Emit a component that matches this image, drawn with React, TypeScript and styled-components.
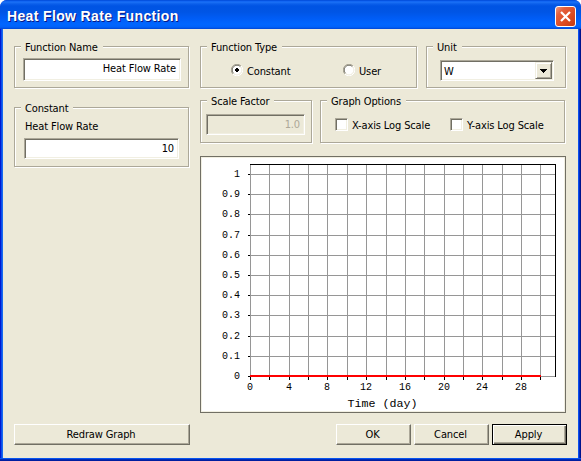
import styled, { createGlobalStyle, css } from "styled-components";

const GlobalStyle = createGlobalStyle`
  * {
    box-sizing: border-box;
  }

  body {
    margin: 0;
    background: #fff;
    color: #000;
    font: 11px/14px "DejaVu Sans Condensed", "DejaVu Sans", sans-serif;
    font-stretch: condensed;
    letter-spacing: -0.13px;
    white-space: nowrap;
  }
`;

const face = "#ece9d8";
const shadow = "#aca899";
const darkShadow = "#716f64";

const Window = styled.div`
  display: flex;
  flex-direction: column;
  width: 581px;
  height: 461px;
  overflow: hidden;
  border-radius: 7px 7px 0 0;
  background: #0831d9;
`;

const TitleBar = styled.header`
  display: flex;
  align-items: center;
  justify-content: space-between;
  height: 29px;
  padding: 2px 5px 0 7px;
  background: linear-gradient(
    180deg,
    #0048d0 0,
    #0a5cf0 1px,
    #1c72f6 2px,
    #0a5eea 4px,
    #0054e3 6px,
    #0055e5 12px,
    #005cf5 18px,
    #0066ff 24px,
    #0062fa 27px,
    #0046d4 29px
  );
`;

const Title = styled.h1`
  margin: 0;
  color: #fff;
  font: bold 14px/18px "Liberation Sans", Arial, sans-serif;
  letter-spacing: 0.36px;
  text-shadow: 1px 1px 0 #0a1883;
`;

const CloseButton = styled.button`
  display: flex;
  align-items: center;
  justify-content: center;
  width: 21px;
  height: 21px;
  margin-top: 1px;
  padding: 0;
  border: 1px solid #fff;
  border-radius: 3px;
  background: linear-gradient(135deg, #ee9a80 0, #e4603c 25%, #dc4a20 65%, #c23a12 100%);
`;

const Frame = styled.div`
  display: flex;
  flex: 1;
  padding: 0 3px 3px;
  background:
    linear-gradient(0deg, #001ea0 0 1px, #0029b8 1px 2px, #0855ee 2px 3px, transparent 3px),
    linear-gradient(90deg, #0019cf 0 1px, #0b4bec 1px 2px, #166aee 2px 3px, transparent 3px 578px, #0b50ee 578px 579px, #0029c0 579px 580px, #00138c 580px);
`;

const Body = styled.main`
  display: flex;
  flex: 1;
  flex-direction: column;
  gap: 11px;
  padding: 17px 11px 0;
  background: ${face};
`;

const Columns = styled.div`
  display: flex;
  gap: 10px;
`;

const Column = styled.div<{ $width: number; $gap: number }>`
  display: flex;
  flex-direction: column;
  gap: ${({ $gap }) => $gap}px;
  width: ${({ $width }) => $width}px;
`;

const Row = styled.div<{ $gap: number }>`
  display: flex;
  gap: ${({ $gap }) => $gap}px;
`;

const OptionsRow = styled(Row)`
  padding: 11px 0 12px;
`;

const Group = styled.section<{ $width: number; $height: number; $pad: string }>`
  position: relative;
  width: ${({ $width }) => $width - 1}px;
  height: ${({ $height }) => $height - 1}px;
  margin: 0 1px 1px 0;
  padding: ${({ $pad }) => $pad};
  border: 1px solid ${shadow};
  box-shadow: 1px 1px 0 #fff, inset 1px 1px 0 #fff;
`;

const Legend = styled.h2`
  position: absolute;
  top: -6px;
  left: 6px;
  margin: 0;
  padding: 0 5px 0 4px;
  background: ${face};
  font: inherit;
`;

const sunken = css`
  border: 1px solid;
  border-color: ${shadow} #fff #fff ${shadow};
  box-shadow: inset 1px 1px 0 ${darkShadow}, inset -1px -1px 0 #f1efe2;
`;

const Field = styled.div<{ $width: number; $height: number; $disabled?: boolean }>`
  width: ${({ $width }) => $width}px;
  height: ${({ $height }) => $height}px;
  padding: 3px 4px 0 3px;
  background: ${({ $disabled }) => ($disabled ? face : "#fff")};
  color: ${({ $disabled }) => ($disabled ? shadow : "#000")};
  text-align: right;
  ${sunken}
`;

const FieldLabel = styled.label`
  display: block;
  margin-bottom: 4px;
  padding: 1px 0 0 1px;
`;

const Option = styled.label<{ $width?: number }>`
  display: flex;
  gap: 4px;
  width: ${({ $width }) => ($width ? `${$width}px` : "auto")};
  height: 15px;
  line-height: 16px;
`;

const CheckBox = styled.span`
  width: 13px;
  height: 13px;
  background: #fff;
  ${sunken}
`;

const Select = styled.div`
  display: flex;
  justify-content: space-between;
  width: 114px;
  height: 21px;
  padding: 1px 1px 1px 3px;
  background: #fff;
  ${sunken}
`;

const SelectValue = styled.span`
  padding-top: 3px;
`;

const raised = css`
  border: 1px solid;
  border-color: #fff ${darkShadow} ${darkShadow} #fff;
  box-shadow: inset -1px -1px 0 ${shadow};
`;

const DropButton = styled.span`
  display: flex;
  align-items: center;
  justify-content: center;
  width: 17px;
  height: 17px;
  background: ${face};
  ${raised}
  border-color: #f1efe2 ${darkShadow} ${darkShadow} #f1efe2;
  box-shadow: inset 1px 1px 0 #fff, inset -1px -1px 0 ${shadow};
`;

const GraphPanel = styled.div`
  width: 366px;
  height: 257px;
  border: 1px solid ${darkShadow};
  background: #fff;
  box-shadow: inset 0 0 0 1px #f1efe2;

  svg {
    display: block;
  }
`;

const Footer = styled.footer`
  display: flex;
  gap: 3px;
`;

const Button = styled.button<{ $width: number; $default?: boolean }>`
  width: ${({ $width }) => $width}px;
  height: 21px;
  padding: 1px 2px 0 0;
  background: ${face};
  color: #000;
  font: inherit;
  letter-spacing: inherit;
  ${raised}
  ${({ $default }) =>
    $default &&
    css`
      border-color: #000;
      box-shadow: inset 1px 1px 0 #fff, inset -1px -1px 0 ${darkShadow}, inset -2px -2px 0 ${shadow};
    `}

  &:first-child {
    margin-right: 143px;
  }
`;

function Radio({ checked }: { checked?: boolean }) {
  return (
    <svg width="12" height="12" viewBox="0 0 12 12">
      <circle cx="6" cy="6" r="5" fill="#fff" />
      <path d="M1.9 10.1A5.5 5.5 0 0 1 10.1 1.9" fill="none" stroke={shadow} />
      <path d="M2.6 9.4A4.6 4.6 0 0 1 9.4 2.6" fill="none" stroke={darkShadow} />
      <path d="M10.1 1.9A5.5 5.5 0 0 1 1.9 10.1" fill="none" stroke="#fff" />
      <path d="M9.4 2.6A4.6 4.6 0 0 1 2.6 9.4" fill="none" stroke="#f1efe2" />
      {checked && <path d="M5 4h2v1h1v2h-1v1h-2v-1h-1v-2h1z" fill="#000" />}
    </svg>
  );
}

const gridX = [250, 269, 289, 308, 327, 347, 366, 386, 405, 424, 444, 463, 482, 502, 521, 540];
const gridY = [376, 356, 336, 315, 295, 275, 255, 235, 214, 194, 174];

function Graph() {
  return (
    <svg width="364" height="255" viewBox="201 157 364 255">
      <g shapeRendering="crispEdges">
        {gridX.map((x) => (
          <g key={x}>
            <rect x={x} y="165" width="1" height="212" fill="#969696" />
            <rect x={x} y="377" width="1" height="3" fill="#000" />
          </g>
        ))}
        {gridY.map((y) => (
          <g key={y}>
            <rect x="250" y={y} width="305" height="1" fill="#969696" />
            <rect x="248" y={y} width="2" height="1" fill="#000" />
          </g>
        ))}
        <rect x="250" y="164" width="306" height="1" fill="#000" />
        <rect x="555" y="164" width="1" height="213" fill="#000" />
        <rect x="250" y="375" width="291" height="2" fill="#f00" />
      </g>
      <g fontFamily='"Liberation Mono", monospace' fontSize="10" letterSpacing="0" fill="#000">
        {gridY.map((y, i) => (
          <text key={y} x="240" y={y + 3} textAnchor="end">
            {i / 10}
          </text>
        ))}
        {gridX.map((x, i) =>
          i % 2 === 0 ? (
            <text key={x} x={x} y="390" textAnchor="middle">
              {i * 2}
            </text>
          ) : null,
        )}
        <text x="347.5" y="407" fontSize="11.67">
          Time (day)
        </text>
      </g>
    </svg>
  );
}

export default function App() {
  return (
    <>
      <GlobalStyle />
      <Window>
        <TitleBar>
          <Title>Heat Flow Rate Function</Title>
          <CloseButton aria-label="Close">
            <svg width="13" height="13" viewBox="0 0 13 13">
              <path d="M2 2l9 9M11 2l-9 9" stroke="#fff" strokeWidth="2.2" />
            </svg>
          </CloseButton>
        </TitleBar>
        <Frame>
          <Body>
            <Columns>
              <Column $width={176} $gap={18}>
                <Group $width={176} $height={43} $pad="11px 8px 0">
                  <Legend>Function Name</Legend>
                  <Field $width={158} $height={23}>
                    Heat Flow Rate
                  </Field>
                </Group>
                <Group $width={176} $height={61} $pad="11px 9px 0">
                  <Legend>Constant</Legend>
                  <FieldLabel>Heat Flow Rate</FieldLabel>
                  <Field $width={155} $height={21}>
                    10
                  </Field>
                </Group>
              </Column>
              <Column $width={367} $gap={0}>
                <Row $gap={8}>
                  <Group $width={218} $height={43} $pad="17px 30px 0">
                    <Legend>Function Type</Legend>
                    <Row $gap={0}>
                      <Option $width={112}>
                        <Radio checked />
                        Constant
                      </Option>
                      <Option>
                        <Radio />
                        User
                      </Option>
                    </Row>
                  </Group>
                  <Group $width={141} $height={43} $pad="13px 13px 0">
                    <Legend>Unit</Legend>
                    <Select>
                      <SelectValue>W</SelectValue>
                      <DropButton>
                        <svg width="7" height="4" viewBox="0 0 7 4" shapeRendering="crispEdges">
                          <path d="M0 0h7v1h-1v1h-1v1h-1v1h-1v-1h-1v-1h-1v-1h-1z" />
                        </svg>
                      </DropButton>
                    </Select>
                  </Group>
                </Row>
                <OptionsRow $gap={7}>
                  <Group $width={113} $height={44} $pad="13px 5px 0">
                    <Legend>Scale Factor</Legend>
                    <Field $width={99} $height={21} $disabled>
                      1.0
                    </Field>
                  </Group>
                  <Group $width={246} $height={44} $pad="17px 14px 0">
                    <Legend>Graph Options</Legend>
                    <Row $gap={0}>
                      <Option $width={115}>
                        <CheckBox />
                        X-axis Log Scale
                      </Option>
                      <Option>
                        <CheckBox />
                        Y-axis Log Scale
                      </Option>
                    </Row>
                  </Group>
                </OptionsRow>
                <GraphPanel>
                  <Graph />
                </GraphPanel>
              </Column>
            </Columns>
            <Footer>
              <Button $width={176}>Redraw Graph</Button>
              <Button $width={75}>OK</Button>
              <Button $width={75}>Cancel</Button>
              <Button $width={75} $default>
                Apply
              </Button>
            </Footer>
          </Body>
        </Frame>
      </Window>
    </>
  );
}
